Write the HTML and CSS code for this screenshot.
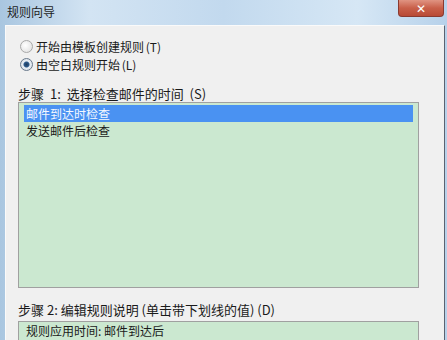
FILE: index.html
```html
<!DOCTYPE html>
<html lang="zh-CN">
  <head>
    <meta charset="UTF-8" />
    <title>规则向导</title>
    <link rel="stylesheet" href="styles.css">
  </head>
  <body>
    <div class="window">
      <div class="titlebar">
        <span class="title">规则向导</span>
        <span class="close">✕</span>
      </div>
      <div class="panel">
        <div class="choices">
          <label class="choice"><span class="radio"></span>开始由模板创建规则 (T)</label>
          <label class="choice"><span class="radio checked"></span>由空白规则开始 (L)</label>
        </div>
        <div class="step">步骤 1: 选择检查邮件的时间 (S)</div>
        <div class="listbox">
          <div class="item selected">邮件到达时检查</div>
          <div class="item">发送邮件后检查</div>
        </div>
        <div class="step step2">步骤 2: 编辑规则说明 (单击带下划线的值) (D)</div>
        <div class="desc">规则应用时间: 邮件到达后</div>
      </div>
    </div>
  </body>
</html>
```

FILE: styles.css
```css
body {
  margin: 0;
  width: 447px;
  height: 340px;
  overflow: hidden;
  font-family: "Noto Sans CJK SC", "DejaVu Sans", sans-serif;
  font-size: 12px;
  color: #1a1a1a;
}
.window {
  height: 340px;
  display: flex;
  flex-direction: column;
  background: linear-gradient(90deg, #a9c6e0 0%, #d3e4f3 20%, #c2d9ee 50%, #d6e7f5 80%, #b7d1ea 100%);
}
.titlebar {
  height: 25px;
  display: flex;
  justify-content: space-between;
  align-items: flex-start;
  padding: 0 3px 0 7px;
}
.title {
  margin-top: 4px;
  line-height: 16px;
  color: #1e1e1e;
}
.close {
  width: 46px;
  height: 17px;
  border: 1px solid #8a3a30;
  border-top: none;
  border-radius: 0 0 4px 4px;
  background: linear-gradient(#e09482, #c9604a 50%, #b84a36);
  color: #fff;
  font-size: 12px;
  font-weight: bold;
  text-align: center;
  line-height: 15px;
  box-sizing: border-box;
}
.panel {
  flex: 1;
  overflow: hidden;
  margin: 0 2px 0 5px;
  border-left: 1px solid #fafafa;
  border-top: 1px solid #fafafa;
  border-right: 1px solid #5a6270;
  background: #f0f0f0;
  padding: 11px 25px 0 12px;
}
.choices {
  display: flex;
  flex-direction: column;
  padding-left: 2px;
}
.choice {
  display: flex;
  align-items: center;
  height: 18px;
  gap: 3px;
  word-spacing: -1px;
}
.radio {
  width: 11px;
  height: 11px;
  border-radius: 50%;
  border: 1px solid #a8a8a8;
  background: radial-gradient(circle at 40% 40%, #ffffff, #dcdcdc);
}
.radio.checked {
  border-color: #6a7a8c;
  background: radial-gradient(circle, #1f3b5c 0, #2c5a8c 2.5px, #e8eef4 3.5px, #d0d8e0 100%);
}
.step {
  margin-top: 13px;
  height: 16px;
  line-height: 15px;
  font-size: 13px;
  word-spacing: 3px;
}
.step2 {
  margin-top: 14px;
  height: 19px;
  word-spacing: 0;
}
.listbox {
  height: 180px;
  border: 1px solid #a0a0a0;
  background: #cbe8d0;
  padding: 2px 5px;
}
.item {
  height: 17px;
  line-height: 17px;
  padding-left: 2px;
}
.item.selected {
  background: #4a92f2;
  color: #f4f8ff;
}
.desc {
  height: 18px;
  border: 1px solid #a0a0a0;
  border-bottom: none;
  background: #cbe8d0;
  padding: 1px 7px;
  line-height: 15px;
}
```
